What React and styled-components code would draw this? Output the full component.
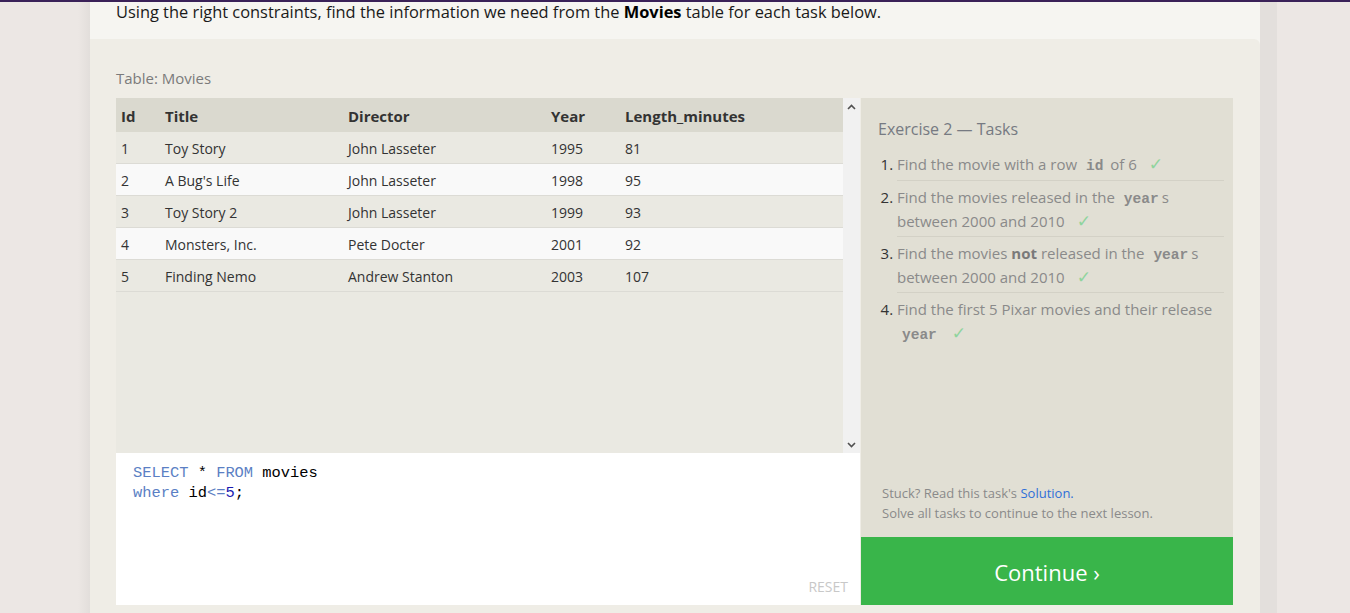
import styled, { createGlobalStyle } from "styled-components";

const GlobalStyle = createGlobalStyle`
  html, body {
    margin: 0;
    padding: 0;
    height: 100%;
    overflow: hidden;
  }
  body {
    font-family: "Open Sans", "Noto Sans", sans-serif;
    background: #ece7e4;
  }
`;

const movies = [
  { id: 1, title: "Toy Story", director: "John Lasseter", year: 1995, length: 81 },
  { id: 2, title: "A Bug's Life", director: "John Lasseter", year: 1998, length: 95 },
  { id: 3, title: "Toy Story 2", director: "John Lasseter", year: 1999, length: 93 },
  { id: 4, title: "Monsters, Inc.", director: "Pete Docter", year: 2001, length: 92 },
  { id: 5, title: "Finding Nemo", director: "Andrew Stanton", year: 2003, length: 107 },
];

const Chevron = ({ down }) => (
  <svg width="9" height="6" viewBox="0 0 9 6">
    <polyline
      points={down ? "1,1 4.5,4.5 8,1" : "1,5 4.5,1.5 8,5"}
      fill="none"
      stroke="#505050"
      strokeWidth="1.6"
    />
  </svg>
);

const App = () => {
  return (
    <Page>
      <GlobalStyle />
      <Main>
        <Intro>
          Using the right constraints, find the information we need from the <b>Movies</b> table for
          each task below.
        </Intro>
        <Exercise>
          <TableLabel>Table: Movies</TableLabel>
          <Workspace>
            <LeftColumn>
              <TableViewport>
                <TableArea>
                  <HeadRow>
                    <span>Id</span>
                    <span>Title</span>
                    <span>Director</span>
                    <span>Year</span>
                    <span>Length_minutes</span>
                  </HeadRow>
                  {movies.map((m, i) => (
                    <Row key={m.id} $alt={i % 2 === 1}>
                      <span>{m.id}</span>
                      <span>{m.title}</span>
                      <span>{m.director}</span>
                      <span>{m.year}</span>
                      <span>{m.length}</span>
                    </Row>
                  ))}
                </TableArea>
                <Scrollbar>
                  <ScrollArrow>
                    <Chevron />
                  </ScrollArrow>
                  <ScrollArrow>
                    <Chevron down />
                  </ScrollArrow>
                </Scrollbar>
              </TableViewport>
              <Editor>
                <Code>
                  <Kw>SELECT</Kw> * <Kw>FROM</Kw> movies
                  {"\n"}
                  <Kw>where</Kw> id<Kw>&lt;=</Kw>
                  <Num>5</Num>;
                </Code>
                <Reset>RESET</Reset>
              </Editor>
            </LeftColumn>
            <RightColumn>
              <TaskPanel>
                <PanelTitle>Exercise 2 — Tasks</PanelTitle>
                <TaskList>
                  <Task>
                    Find the movie with a row <InlineCode>id</InlineCode> of 6<Check>✓</Check>
                  </Task>
                  <Task>
                    Find the movies released in the <InlineCode>year</InlineCode>s between 2000
                    and 2010<Check>✓</Check>
                  </Task>
                  <Task>
                    Find the movies <b>not</b> released in the <InlineCode>year</InlineCode>s
                    between 2000 and 2010<Check>✓</Check>
                  </Task>
                  <Task>
                    Find the first 5 Pixar movies and their release <InlineCode>year</InlineCode>
                    <Check>✓</Check>
                  </Task>
                </TaskList>
                <PanelFooter>
                  Stuck? Read this task's <SolutionLink>Solution.</SolutionLink>
                  <br />
                  Solve all tasks to continue to the next lesson.
                </PanelFooter>
              </TaskPanel>
              <ContinueButton>Continue ›</ContinueButton>
            </RightColumn>
          </Workspace>
        </Exercise>
      </Main>
    </Page>
  );
};

export default App;

const Page = styled.div`
  height: 100vh;
  border-top: 2px solid #3a2158;
  box-sizing: border-box;
  background: linear-gradient(
    to right,
    #ece7e4 0px,
    #ece7e4 78px,
    #e2dedb 90px,
    #e3dfdc 1260px,
    #e3dfdc 1277px,
    #ece7e4 1277px
  );
  padding-left: 90px;
`;

const Main = styled.div`
  width: 1170px;
  height: 100%;
  background: #f6f5f1;
  display: flex;
  flex-direction: column;
`;

const Intro = styled.p`
  margin: 0;
  height: 37px;
  padding: 0 26px;
  font-size: 16.4px;
  line-height: 20px;
  color: #1a1a1a;
  b {
    font-weight: 700;
    color: #000;
  }
`;

const Exercise = styled.section`
  flex: 1;
  background: #efede6;
  border-top-right-radius: 6px;
  padding: 29px 27px 0 26px;
`;

const TableLabel = styled.div`
  font-size: 15px;
  line-height: 20px;
  color: #7b7b7b;
  margin-bottom: 10px;
`;

const Workspace = styled.div`
  display: grid;
  grid-template-columns: 744px 1fr;
  gap: 1px;
  height: 507px;
`;

const LeftColumn = styled.div`
  display: flex;
  flex-direction: column;
`;

const TableViewport = styled.div`
  height: 355px;
  display: flex;
  background: #eae9e2;
`;

const TableArea = styled.div`
  flex: 1;
`;

const gridCols = `
  display: grid;
  grid-template-columns: 44px 183px 203px 74px 1fr;
  box-sizing: border-box;
  padding-left: 5px;
`;

const HeadRow = styled.div`
  ${gridCols}
  height: 34px;
  padding-top: 2px;
  align-items: center;
  background: #dad9cf;
  font-size: 15px;
  font-weight: 700;
  color: #333;
`;

const Row = styled.div`
  ${gridCols}
  height: 32px;
  padding-top: 2px;
  border-bottom: 1px solid #dcdbd5;
  background: ${({ $alt }) => ($alt ? "#f9f9f9" : "#eae9e2")};
  font-size: 14px;
  line-height: 29px;
  color: #333;
`;

const Scrollbar = styled.div`
  width: 17px;
  background: #f1f1f1;
  display: flex;
  flex-direction: column;
  justify-content: space-between;
`;

const ScrollArrow = styled.div`
  height: 17px;
  display: flex;
  align-items: center;
  justify-content: center;
`;

const Editor = styled.div`
  flex: 1;
  background: #fff;
  padding: 10px 12px 8px 17px;
  display: flex;
  flex-direction: column;
  justify-content: space-between;
`;

const Code = styled.pre`
  margin: 0;
  font-family: "Liberation Mono", "DejaVu Sans Mono", monospace;
  font-size: 15.4px;
  line-height: 20px;
  color: #000;
`;

const Kw = styled.span`
  color: #5b7fc4;
`;

const Num = styled.span`
  color: #1a1ab0;
`;

const Reset = styled.div`
  align-self: flex-end;
  font-size: 14px;
  line-height: 20px;
  color: #c8c8c8;
`;

const RightColumn = styled.div`
  display: flex;
  flex-direction: column;
`;

const TaskPanel = styled.div`
  flex: 1;
  background: #e1dfd4;
  padding: 20px 9px 14px 17px;
  display: flex;
  flex-direction: column;
`;

const PanelTitle = styled.h3`
  margin: 0 0 8px;
  font-size: 16px;
  line-height: 22px;
  font-weight: 400;
  color: #767a82;
`;

const TaskList = styled.ol`
  margin: 0;
  padding-left: 19px;
  color: #333;
`;

const Task = styled.li`
  font-size: 15px;
  line-height: 24px;
  color: #8a8a8a;
  padding: 4px 0 3px;
  border-bottom: 1px solid #d3d1c6;
  &::marker {
    color: #333;
  }
  &:first-child {
    padding-bottom: 4px;
  }
  &:last-child {
    border-bottom: none;
  }
  b {
    color: #7a7a7a;
  }
`;

const InlineCode = styled.code`
  font-family: "Liberation Mono", "DejaVu Sans Mono", monospace;
  font-weight: 700;
  font-size: 14.5px;
  line-height: 1;
  color: #8a8a8a;
  padding: 0 3px 0 5px;
`;

const Check = styled.span`
  font-family: "DejaVu Sans", sans-serif;
  font-size: 17px;
  line-height: 1;
  color: #8fd49d;
  margin-left: 12px;
`;

const PanelFooter = styled.p`
  margin: auto 0 0 4px;
  font-size: 13px;
  line-height: 20px;
  color: #8a8a8a;
`;

const SolutionLink = styled.a`
  color: #2f6fd8;
  text-decoration: none;
`;

const ContinueButton = styled.button`
  height: 68px;
  padding-top: 2px;
  border: none;
  background: #39b54a;
  color: #fff;
  font-family: inherit;
  font-size: 22px;
  cursor: pointer;
`;
